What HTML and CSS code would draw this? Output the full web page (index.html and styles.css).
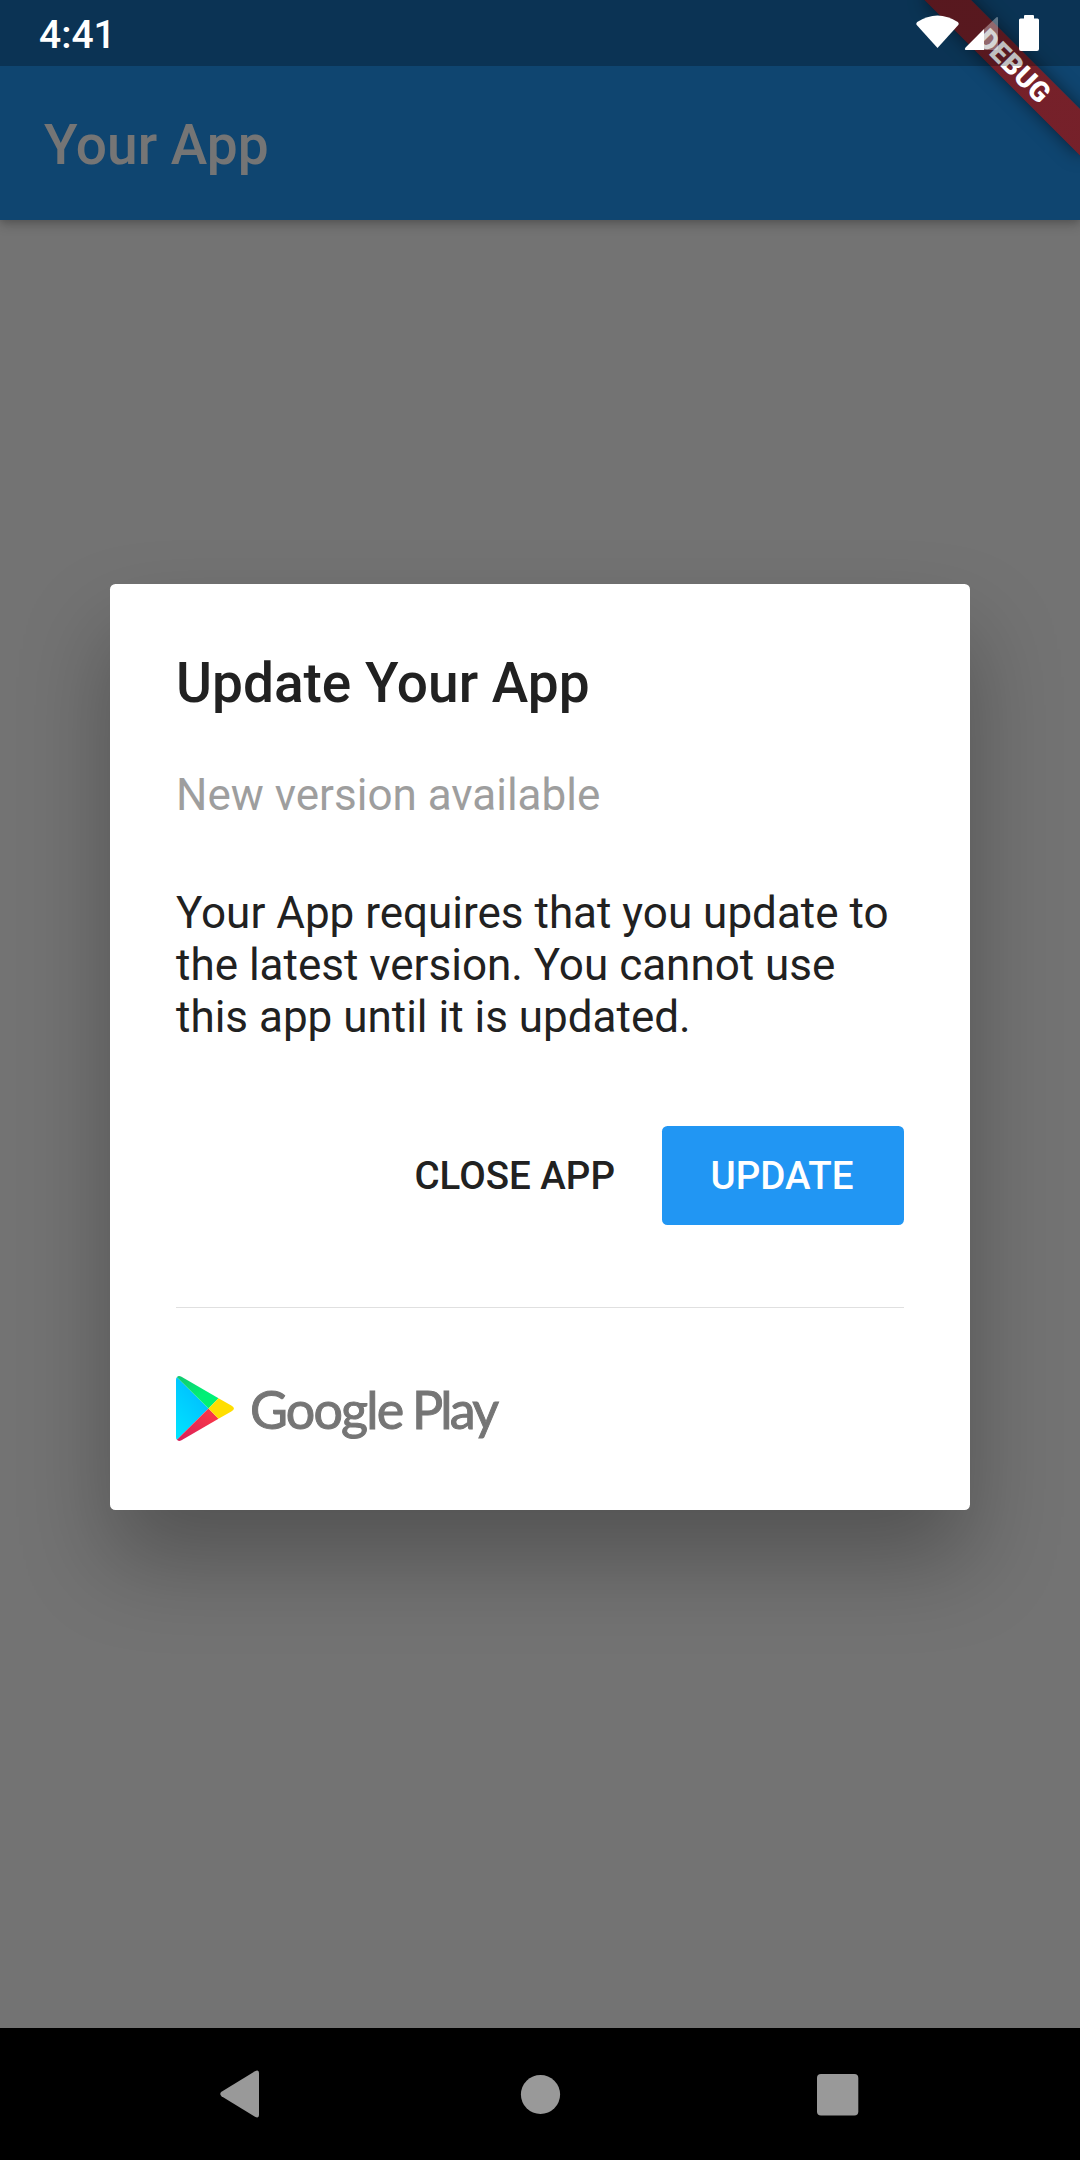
FILE: index.html
```html
<!DOCTYPE html>
<html lang="en">
<head>
<meta charset="utf-8">
<title>Your App</title>
<link rel="stylesheet" href="styles.css">
</head>
<body>
<div class="screen">
  <header class="app-bar"><h1 class="app-title">Your App</h1></header>
  <main class="content"></main>
  <nav class="nav-bar">
    <svg class="nav-icon" viewBox="0 0 60 60"><path d="M9.500 27.800 43 7.200Q47 5.200 47 9.500V50.500Q47 54.800 43 52.800L9.500 32.200Q7 30 9.500 27.800Z"/></svg>
    <svg class="nav-icon" viewBox="0 0 60 60"><circle cx="30.5" cy="30.5" r="19.6"/></svg>
    <svg class="nav-icon" viewBox="0 0 60 60"><rect x="9" y="10" width="41.3" height="41.5" rx="4"/></svg>
  </nav>
  <div class="scrim">
    <section class="dialog">
      <h2 class="dialog-title">Update Your App</h2>
      <p class="subtitle">New version available</p>
      <p class="message">Your App requires that you update to the latest version. You cannot use this app until it is updated.</p>
      <div class="actions">
        <button class="btn">CLOSE APP</button>
        <button class="btn btn-primary">UPDATE</button>
      </div>
      <footer class="store">
        <svg class="play-icon" viewBox="0 0 58 65">
          <defs>
            <linearGradient id="blue" x1=".8" y1="0" x2=".2" y2="1"><stop offset="0" stop-color="#00b8ff"/><stop offset="1" stop-color="#00e2ff"/></linearGradient>
            <linearGradient id="red" x1="1" y1="0" x2="0" y2="1"><stop offset="0" stop-color="#ff3a44"/><stop offset="1" stop-color="#d7205b"/></linearGradient>
            <linearGradient id="green" x1="0" y1="0" x2=".6" y2=".6"><stop offset="0" stop-color="#13c770"/><stop offset="1" stop-color="#00f076"/></linearGradient>
          </defs>
          <path fill="url(#blue)" d="M.9 1.2Q0 2 0 4V61Q0 63 .9 63.8L32.5 32.5Z"/>
          <path fill="url(#green)" d="M.9 1.2Q2.5-.8 5.5.8L42.5 22.2 32.5 32.5Z"/>
          <path fill="url(#red)" d="M.9 63.8Q2.5 65.8 5.5 64.2L42.5 42.8 32.5 32.5Z"/>
          <path fill="#ffde00" d="M42.5 22.2 55.3 29.6Q60.6 32.5 55.3 35.4L42.5 42.8 32.5 32.5Z"/>
        </svg>
        <span class="store-name">Google <span class="store-play">Play</span></span>
      </footer>
    </section>
  </div>
  <div class="ribbon">DEBUG</div>
  <div class="status-bar">
    <span class="clock">4:41</span>
    <svg class="status-icons" viewBox="0 0 124 66">
      <path d="M22.5 48 1.5 24.8Q.8 23 2.200 22 22.500 9 42.800 22 44.200 23 43.500 24.800Z"/>
      <path opacity=".35" d="M69 29 81.500 17.300Q83 16.500 83 18.500V48Q83 50 81 50H69Z"/>
      <path d="M50.600 47.500 69 29V50H50.800Q49 49.500 50.600 47.500Z"/>
      <path d="M110 15H118Q119 15 119 16V18.500H122.500Q124 18.500 124 20V49Q124 51 122 51H106Q104 51 104 49V20Q104 18.500 105.500 18.500H109V16Q109 15 110 15Z"/>
    </svg>
  </div>
</div>
</body>
</html>
```
FILE: styles.css
```css
* { box-sizing: border-box; margin: 0; padding: 0; }

body { font-family: Roboto, "Liberation Sans", sans-serif; }

.screen {
  position: relative;
  display: flex;
  flex-direction: column;
  width: 1080px;
  height: 2160px;
  overflow: hidden;
  background: #fafafa;
}

.app-bar {
  display: flex;
  align-items: center;
  height: 220px;
  padding: 66px 44px 0;
  background: #2196f3;
  box-shadow: 0 5px 11px rgba(0, 0, 0, .2), 0 2px 6px rgba(0, 0, 0, .1);
}

.app-title {
  padding-top: 4px;
  font-size: 55px;
  font-weight: 500;
  line-height: 64px;
  color: #fff;
}

.content { flex: 1; }

.nav-bar {
  position: relative;
  z-index: 2;
  display: flex;
  align-items: center;
  justify-content: center;
  gap: 238px;
  height: 132px;
  background: #000;
}

.nav-icon { width: 60px; height: 60px; fill: #999; }

.scrim {
  position: absolute;
  inset: 0;
  display: flex;
  justify-content: center;
  align-items: center;
  padding: 66px 110px 132px;
  background: rgba(0, 0, 0, .54);
}

.dialog {
  width: 860px;
  height: 926px;
  padding: 67px 66px 66px;
  border-radius: 5.5px;
  background: #fff;
  box-shadow: 0 50px 90px rgba(0, 0, 0, .28);
}

.dialog-title {
  font-size: 55px;
  font-weight: 500;
  line-height: 64px;
  color: #212121;
}

.subtitle {
  margin-top: 54px;
  font-size: 44px;
  line-height: 52px;
  color: #9e9e9e;
}

.message {
  margin-top: 66px;
  font-size: 44px;
  line-height: 52px;
  color: #212121;
}

.actions {
  display: flex;
  justify-content: flex-end;
  margin-top: 83px;
}

.btn {
  height: 99px;
  padding: 0 47px 0 46px;
  border: 0;
  background: none;
  font: 500 38.5px/45px Roboto, sans-serif;
  color: #212121;
}

.btn-primary {
  width: 242px;
  padding-right: 48px;
  border-radius: 5.5px;
  background: #2196f3;
  color: #fff;
}

.store {
  display: flex;
  align-items: center;
  gap: 16px;
  margin-top: 82px;
  padding-top: 68px;
  border-top: 1px solid #e0e0e0;
}

.play-icon { width: 58px; height: 65px; }

.store-name {
  padding-top: 2px;
  font: 400 52px/63px Lato, sans-serif;
  letter-spacing: -1.8px;
  word-spacing: -2px;
  color: #757575;
  -webkit-text-stroke: 1px #757575;
}

.store-play { letter-spacing: -2.8px; }

/* Corner ribbon turned about the top right corner of the screen */
.ribbon {
  position: absolute;
  top: 77px;
  left: 970px;
  width: 220px;
  height: 33px;
  transform: rotate(45deg);
  transform-origin: 110px -77px;
  background: linear-gradient(rgba(183, 28, 28, .627), rgba(183, 28, 28, .627)), rgba(0, 0, 0, .42);
  box-shadow: 0 0 17px rgba(0, 0, 0, .5);
  font-size: 28px;
  font-weight: 900;
  line-height: 33px;
  letter-spacing: .2px;
  text-align: center;
  color: #fff;
}

.status-bar {
  position: absolute;
  inset: 0 0 auto;
  display: flex;
  justify-content: space-between;
  height: 66px;
  padding: 0 41px 0 39px;
  background: rgba(0, 0, 0, .25);
}

.clock {
  padding-top: 2px;
  font-size: 39px;
  font-weight: 500;
  line-height: 66px;
  color: #fff;
}

.status-icons { width: 124px; height: 66px; fill: #fff; }
```
